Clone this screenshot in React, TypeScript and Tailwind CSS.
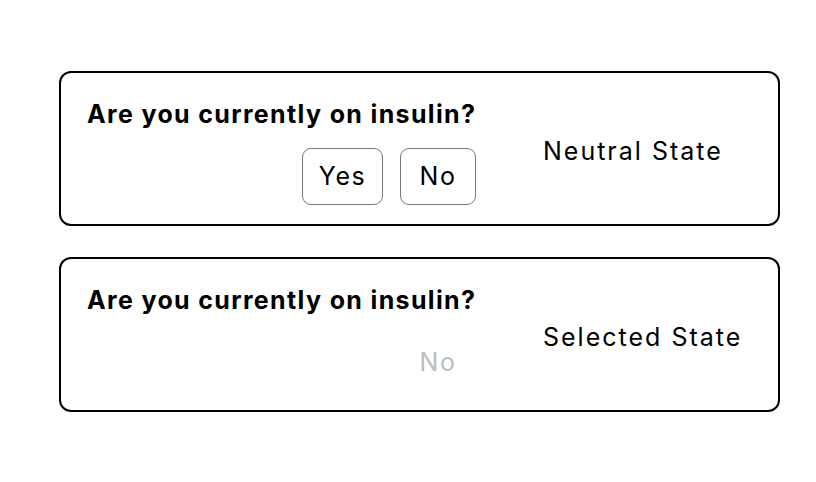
import React from "react";

type CardProps = {
  label: string;
  selected?: boolean;
};

const QuestionCard = ({ label, selected = false }: CardProps) => {
  return (
    <div className="flex h-[155px] w-[721px] items-start rounded-[12px] border-2 border-black bg-white pl-[26px] pt-[26px]">
      {/* Question + answers */}
      <div className="flex w-[390px] flex-col">
        <h2 className="whitespace-nowrap text-[25px] font-bold leading-[30px] tracking-[1.35px] text-black">
          Are you currently on insulin?
        </h2>
        <div className="mt-[19px] flex justify-end gap-[17px] pr-px">
          <button
            className={
              selected
                ? "h-[57px] w-[81px] rounded-[9px] border border-transparent text-[25px] tracking-[1.5px] text-transparent"
                : "h-[57px] w-[81px] rounded-[9px] border border-[#777] text-[25px] tracking-[1.5px] text-black"
            }
          >
            Yes
          </button>
          <button
            className={
              selected
                ? "h-[57px] w-[76px] rounded-[9px] border border-transparent text-[25px] tracking-[1.5px] text-[#bdbdbd]"
                : "h-[57px] w-[76px] rounded-[9px] border border-[#777] text-[25px] tracking-[1.5px] text-black"
            }
          >
            No
          </button>
        </div>
      </div>

      {/* State label */}
      <div className="ml-[66px] flex h-full items-center pb-[22px]">
        <span className="whitespace-nowrap text-[25px] leading-[30px] tracking-[2px] text-black">
          {label}
        </span>
      </div>
    </div>
  );
};

export default function App() {
  return (
    <div
      className="min-h-[482px] w-[816px] bg-white pl-[59px] pt-[71px]"
      style={{ fontFamily: "Inter, 'Liberation Sans', sans-serif" }}
    >
      <div className="flex flex-col gap-[31px]">
        <QuestionCard label="Neutral State" />
        <QuestionCard label="Selected State" selected />
      </div>
    </div>
  );
}
